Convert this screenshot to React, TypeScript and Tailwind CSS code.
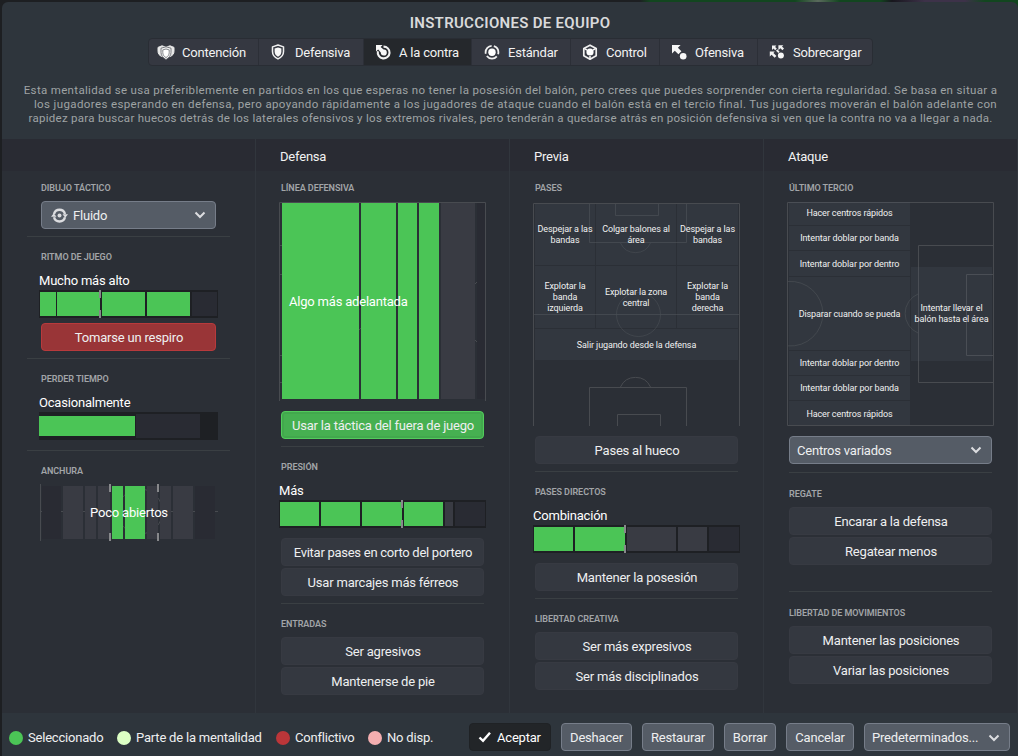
import type { ReactNode } from "react";
import { clsx } from "clsx";

const GREEN = "bg-[#4bc556]";
const GREY = "bg-[#393b43]";
const DARK = "bg-[#292b33]";

/* ---------- Icons ---------- */

const SHIELD = "M9 1.2 15.2 3.2V8.4C15.2 12.4 12.8 15 9 16.8 5.2 15 2.8 12.4 2.8 8.4V3.2Z";

const ContainIcon = () => (
  <svg viewBox="0 0 18 18" className="h-[18px] w-[18px] shrink-0">
    <path d="M1 4.4 5 2.8 9 4.2 13 2.8 17 4.4V8.2C17 11 15.6 12.4 13 13.6L5 13.6C2.4 12.4 1 11 1 8.2Z" fill="#e9e9e9" stroke="#e9e9e9" strokeWidth="1" strokeLinejoin="round" />
    <path d="M9 3.8 14 5.2V9.4C14 12.6 12 14.8 9 16.6 6 14.8 4 12.6 4 9.4V5.2Z" fill="#f2f2f2" stroke="#5a5d64" strokeWidth="0.8" />
    <path d="M9 6 12.2 6.9V9.6C12.2 11.9 11 13.3 9 14.6 7 13.3 5.8 11.9 5.8 9.6V6.9Z" fill="#fff" stroke="#6a6d74" strokeWidth="0.8" />
  </svg>
);

const ShieldIcon = () => (
  <svg viewBox="0 0 18 18" className="h-4 w-[18px] shrink-0">
    <path d={SHIELD} fill="none" stroke="#f0f0f0" strokeWidth="1.7" strokeLinejoin="round" />
    <path d="M9 3.8 12.8 5V8.6C12.8 11.2 11.4 13 9 14.3 6.6 13 5.2 11.2 5.2 8.6V5Z" fill="#f7f7f7" />
  </svg>
);

const CounterIcon = () => (
  <svg viewBox="0 0 18 18" className="h-[18px] w-[18px] shrink-0">
    <path d="M9.5 3.6A5.9 5.9 0 1 1 3.9 8.2" fill="none" stroke="#f2f2f2" strokeWidth="2.1" />
    <path d="M2 2H8.6L6.6 4 9.6 6.6A3 3 0 1 1 6.8 9.6L4.2 6.4 2 8.6Z" fill="#f7f7f7" />
  </svg>
);

const StandardIcon = () => (
  <svg viewBox="0 0 18 18" className="h-[18px] w-[18px] shrink-0">
    <circle cx="9" cy="9.2" r="6.4" fill="none" stroke="#f0f0f0" strokeWidth="1.8" strokeDasharray="11.1 2.3" strokeDashoffset="-4.5" />
    <circle cx="9" cy="9.2" r="3.7" fill="#fff" />
  </svg>
);

const ControlIcon = () => (
  <svg viewBox="0 0 18 18" className="h-[18px] w-[18px] shrink-0">
    <path d="M9 2.2 15.2 5.4V12.8L9 16.2 2.8 12.8V5.4Z" fill="none" stroke="#f0f0f0" strokeWidth="1.7" strokeLinejoin="round" />
    <path d="M3 5.4 6 7M15 5.4 12 7M9 16V13" stroke="#f0f0f0" strokeWidth="1.6" />
    <circle cx="9" cy="9" r="3.6" fill="#fff" />
  </svg>
);

const AttackIcon = () => (
  <svg viewBox="0 0 18 18" className="h-[18px] w-[18px] shrink-0">
    <path d="M2 2H10.6L7.9 4.7 11.4 8.2 8.4 11.2 4.8 7.7 2 10.6Z" fill="#f7f7f7" />
    <circle cx="13.2" cy="13.2" r="3.3" fill="#f7f7f7" />
  </svg>
);

const OverloadIcon = () => (
  <svg viewBox="0 0 18 18" className="h-[18px] w-[18px] shrink-0">
    <path d="M4 2.6H8.4L7.1 3.9 8.8 5.6 7.2 7.2 5.5 5.5 4 7Z" fill="#f2f2f2" />
    <path d="M10.4 2.2H15.4L14 3.6 16 5.6 14.4 7.2 12.4 5.2 10.4 7.2Z" fill="#f2f2f2" />
    <path d="M1.8 8.6H6.8L5.4 10 8.4 13 6.6 14.8 3.6 11.8 1.8 13.6Z" fill="#f2f2f2" />
    <path d="M8.6 7 11 9.4" stroke="#f2f2f2" strokeWidth="1.8" />
    <circle cx="12.9" cy="12.6" r="3" fill="#f7f7f7" />
  </svg>
);

const FluidIcon = () => (
  <svg viewBox="0 0 18 18" className="h-[17px] w-[17px] shrink-0">
    <path d="M3.2 7.4A6 6 0 0 1 14.8 7.4M14.8 10.8A6 6 0 0 1 3.2 10.8" fill="none" stroke="#dcdde0" strokeWidth="2.6" />
    <path d="M0 10.2 2.9 6.6 5.8 10.2ZM12.2 7.8H18L15.1 11.4Z" fill="#dcdde0" />
    <circle cx="9" cy="9" r="2.1" fill="#dcdde0" />
  </svg>
);

const Chevron = () => (
  <svg viewBox="0 0 12 8" className="h-2 w-3 shrink-0">
    <path d="M1.5 1.5 6 6 10.5 1.5" fill="none" stroke="#dcdde0" strokeWidth="2" />
  </svg>
);

const CheckIcon = () => (
  <svg viewBox="0 0 14 12" className="h-3 w-3.5 shrink-0">
    <path d="M1.5 6.5 5 9.8 12 1.8" fill="none" stroke="#fff" strokeWidth="2.4" />
  </svg>
);

/* ---------- Building blocks ---------- */

const Label = ({ className, children }: { className?: string; children: ReactNode }) => (
  <h3 className={clsx("ml-[25px] h-[13px] whitespace-nowrap pt-px text-[9px] font-semibold leading-[13px] tracking-[-0.05px] text-[#a2a5a8]", className)}>
    {children}
  </h3>
);

const Value = ({ className, children }: { className?: string; children: ReactNode }) => (
  <div className={clsx("mt-2.5 h-4 whitespace-nowrap leading-4 text-white", className)}>{children}</div>
);

const Divider = ({ className }: { className?: string }) => (
  <div className={clsx("h-px shrink-0 bg-[#3a3f43]", className)} />
);

interface OptionProps {
  variant?: "default" | "selected" | "conflict";
  className?: string;
  children: ReactNode;
}

const Option = ({ variant = "default", className, children }: OptionProps) => (
  <button
    className={clsx(
      "flex h-7 items-center justify-center whitespace-nowrap rounded border pl-px pt-px text-[#eeeff0]",
      variant === "default" && "border-[#373a42] bg-[#343840]",
      variant === "selected" && "border-[#52cc5c] bg-[#46b051] shadow-[inset_0_0_0_2px_#42a84d]",
      variant === "conflict" && "border-[#b83a3c] bg-[#993537]",
      className
    )}
  >
    {children}
  </button>
);

const OptionList = ({ className, children }: { className?: string; children: ReactNode }) => (
  <div className={clsx("ml-[25px] flex w-[203px] flex-col gap-0.5", className)}>{children}</div>
);

const Tick = ({ className }: { className: string }) => (
  <div className={clsx("absolute inset-y-0 flex w-0.5 flex-col justify-between", className)}>
    <span className="h-2 bg-[#87888b]" />
    <span className="h-2 bg-[#87888b]" />
  </div>
);

interface SliderProps {
  segments: string[];
  tick?: string;
  className?: string;
}

const Slider = ({ segments, tick, className }: SliderProps) => (
  <div className={clsx("relative mt-px flex h-7 items-center bg-[#1e2024]", className)}>
    {segments.map((segment, i) => (
      <div key={i} className={clsx("shrink-0", segment)} />
    ))}
    {tick && <Tick className={tick} />}
  </div>
);

const Zone = ({ className, children }: { className?: string; children: ReactNode }) => (
  <button className={clsx("flex items-center justify-center bg-[#5a636d]/16 text-center tracking-[-0.1px]", className)}>{children}</button>
);

const Column = ({ title, children }: { title?: string; children: ReactNode }) => (
  <section className="flex w-[254px] flex-col border-r border-[#31363d] bg-[#2b2f36]">
    <h2 className="flex h-8 shrink-0 items-center bg-[#292b33] pl-6 pt-[3px] text-[#f2f2f2]">{title}</h2>
    {children}
  </section>
);

/* ---------- Columns ---------- */

const ShapeColumn = () => (
  <Column>
    <Label className="ml-[39px] mt-2.5">DIBUJO TÁCTICO</Label>
    <button className="ml-[39px] mt-[7px] flex h-7 w-[175px] items-center rounded border border-[#767d89] bg-[#555c66] pl-[9px] pr-[9px] text-[#eeeff0]">
      <FluidIcon />
      <span className="ml-[5px] flex-1 pt-px text-left">Fluido</span>
      <Chevron />
    </button>
    <Divider className="ml-[25px] mt-[7px] w-[203px]" />

    <Label className="ml-[39px] mt-[13px]">RITMO DE JUEGO</Label>
    <Value className="ml-[37px]">Mucho más alto</Value>
    <Slider
      className="ml-[37px] w-[179px]"
      tick="left-[60px]"
      segments={[
        `ml-px h-6 w-4 ${GREEN}`,
        `ml-px h-6 w-[43px] ${GREEN}`,
        `ml-0.5 h-6 w-[43px] ${GREEN}`,
        `ml-0.5 h-6 w-[43px] ${GREEN}`,
        `ml-0.5 h-6 w-[25px] ${DARK}`,
      ]}
    />
    <Option variant="conflict" className="ml-[39px] mt-[5px] w-[175px]">Tomarse un respiro</Option>
    <Divider className="ml-[25px] mt-[7px] w-[203px]" />

    <Label className="ml-[39px] mt-[13px]">PERDER TIEMPO</Label>
    <Value className="ml-[37px]">Ocasionalmente</Value>
    <Slider
      className="ml-[37px] w-[179px]"
      segments={[`h-5 w-24 ${GREEN}`, `ml-px h-6 w-16 ${DARK}`]}
    />
    <Divider className="ml-[25px] mt-2.5 w-[203px]" />

    <Label className="ml-[39px] mt-[13px]">ANCHURA</Label>
    <div className="relative ml-[38px] mt-[7px] h-[57px] w-[178px]">
      <svg viewBox="0 0 178 57" className="absolute inset-0 h-[57px] w-[178px]" fill="none" stroke="#484b50">
        <path d="M0.5 0V57M1 27.5H178" />
        <circle cx="100" cy="27.5" r="22.5" />
      </svg>
      <div className="relative flex h-full items-center gap-0.5 pb-0.5 pl-0.5 pt-0.5">
        <div className={`h-[53px] w-[19px] ${DARK}`} />
        <div className={`h-[53px] w-5 ${GREY}`} />
        <div className={`h-[53px] w-[11px] ${GREY}`} />
        <div className={`h-[53px] w-3 ${GREY}`} />
        <div className={`h-[53px] w-[11px] ${GREEN}`} />
        <div className={`h-[53px] w-5 ${GREEN}`} />
        <div className={`h-[53px] w-[11px] ${GREY}`} />
        <div className={`h-[53px] w-[11px] ${GREY}`} />
        <div className={`h-[53px] w-5 ${GREY}`} />
        <div className={`h-[53px] w-5 ${DARK}`} />
      </div>
      <Tick className="left-[69px]" />
      <Tick className="left-[117px]" />
      <div className="absolute inset-0 flex items-center justify-center whitespace-nowrap text-white">Poco abiertos</div>
    </div>
  </Column>
);

const DefenceColumn = () => (
  <Column title="Defensa">
    <Label className="mt-2.5">LÍNEA DEFENSIVA</Label>
    <div className="relative ml-[23px] mt-2 h-[199px] w-[207px]">
      <svg viewBox="0 0 207 199" className="absolute inset-0 h-[199px] w-[207px]" fill="none" stroke="#484b50">
        <path d="M0.5 199V0.5H206.5V199M1 43.5H4M1 72.5H4M1 153.5H4M1 180.5H4" />
        <path d="M80 128 82 126M196 82 198 80M196 138 198 140" />
      </svg>
      <div className="relative flex h-[197px] gap-0.5 pl-[3px] pt-px">
        <div className={`w-[77px] ${GREEN}`} />
        <div className={`w-[35px] ${GREEN}`} />
        <div className={`w-[19px] ${GREEN}`} />
        <div className={`w-5 ${GREEN}`} />
        <div className={`w-[34px] ${GREY}`} />
        <div className={`w-2 ${DARK}`} />
      </div>
      <div className="absolute inset-y-0 left-2.5 flex items-center whitespace-nowrap text-white">Algo más adelantada</div>
    </div>
    <OptionList className="mt-2.5">
      <Option variant="selected">Usar la táctica del fuera de juego</Option>
    </OptionList>
    <Divider className="ml-[25px] mt-[7px] w-[203px]" />

    <Label className="mt-[13px]">PRESIÓN</Label>
    <Value className="ml-[23px]">Más</Value>
    <Slider
      className="ml-[23px] w-[207px]"
      tick="left-[122px]"
      segments={[
        `ml-px h-6 w-[39px] ${GREEN}`,
        `ml-0.5 h-6 w-[39px] ${GREEN}`,
        `ml-0.5 h-6 w-10 ${GREEN}`,
        `ml-0.5 h-6 w-[39px] ${GREEN}`,
        `ml-0.5 h-6 w-2 ${GREY}`,
        `ml-0.5 h-6 w-[30px] ${DARK}`,
      ]}
    />
    <OptionList className="mt-2.5">
      <Option className="tracking-[-0.27px]">Evitar pases en corto del portero</Option>
      <Option>Usar marcajes más férreos</Option>
    </OptionList>
    <Divider className="ml-[25px] mt-[7px] w-[203px]" />

    <Label className="mt-[13px]">ENTRADAS</Label>
    <OptionList className="mt-[7px]">
      <Option>Ser agresivos</Option>
      <Option>Mantenerse de pie</Option>
    </OptionList>
  </Column>
);

const BuildUpColumn = () => (
  <Column title="Previa">
    <Label className="mt-2.5">PASES</Label>
    <div className="relative ml-[23px] mt-2 h-[224px] w-[207px] pl-0.5 pt-0.5 text-[9px] leading-[11px] text-[#f0f0f0]">
      <svg viewBox="0 0 207 224" className="absolute inset-0 h-[224px] w-[207px]" fill="none" stroke="#484b50">
        <path d="M0.5 224V1.5H206.5V224" />
        <path d="M82.5 2V13.5H125.5V2M56.5 2V40.5H153.5V2M1 112.5H206" strokeOpacity="0.75" />
        <path d="M87.5 41A16.5 16.5 0 0 0 117.5 41" strokeOpacity="0.6" />
        <circle cx="105.5" cy="112.5" r="22" strokeOpacity="0.6" />
        <path d="M56.5 224V185.5H153.5V224M84.5 224V212.5H127.5V224M87.5 185A16.5 16.5 0 0 1 117.5 185" />
      </svg>
      <div className="relative grid w-[203px] grid-cols-[60px_80px_61px] grid-rows-[61px_62px_31px] gap-px">
        <Zone>Despejar a las<br />bandas</Zone>
        <Zone>Colgar balones al<br />área</Zone>
        <Zone>Despejar a las<br />bandas</Zone>
        <Zone>Explotar la<br />banda<br />izquierda</Zone>
        <Zone className="pt-0.5">Explotar la zona<br />central</Zone>
        <Zone>Explotar la<br />banda<br />derecha</Zone>
        <Zone className="col-span-3 pt-0.5">Salir jugando desde la defensa</Zone>
      </div>
    </div>
    <OptionList className="mt-2.5">
      <Option>Pases al hueco</Option>
    </OptionList>
    <Divider className="ml-[25px] mt-[7px] w-[203px]" />

    <Label className="mt-[13px]">PASES DIRECTOS</Label>
    <Value className="ml-[23px]">Combinación</Value>
    <Slider
      className="ml-[23px] w-[207px]"
      tick="left-[91px]"
      segments={[
        `ml-px h-6 w-[39px] ${GREEN}`,
        `ml-0.5 h-6 w-[50px] ${GREEN}`,
        `ml-0.5 h-6 w-[49px] ${GREY}`,
        `ml-0.5 h-6 w-[29px] ${GREY}`,
        `ml-0.5 h-6 w-[30px] ${DARK}`,
      ]}
    />
    <OptionList className="mt-2.5">
      <Option>Mantener la posesión</Option>
    </OptionList>
    <Divider className="ml-[25px] mt-[7px] w-[203px]" />

    <Label className="mt-[13px]">LIBERTAD CREATIVA</Label>
    <OptionList className="mt-[7px]">
      <Option>Ser más expresivos</Option>
      <Option>Ser más disciplinados</Option>
    </OptionList>
  </Column>
);

const AttackColumn = () => (
  <Column title="Ataque">
    <Label className="mt-2.5">ÚLTIMO TERCIO</Label>
    <div className="relative ml-[23px] mt-2 h-[224px] w-[207px] text-[9px] leading-[11px] text-[#f0f0f0]">
      <svg viewBox="0 0 207 224" className="absolute inset-0 h-[224px] w-[207px]" fill="none" stroke="#484b50">
        <path d="M0.5 0.5H206.5V223.5H0.5Z" />
        <path d="M206 43.5H131.5V180.5H206M206 72.5H179.5V153.5H206" />
        <path d="M1 79.5A32.3 32.3 0 1 1 1 143.9M131 92A21.2 21.2 0 0 0 131 131" strokeOpacity="0.7" />
      </svg>
      <div className="relative flex items-center gap-px pl-0.5">
        <div className="grid w-[121px] grid-rows-[23px_24px_25px_73px_24px_24px_24px] gap-px">
          <Zone>Hacer centros rápidos</Zone>
          <Zone>Intentar doblar por banda</Zone>
          <Zone className="pt-px">Intentar doblar por dentro</Zone>
          <Zone className="pt-px">Disparar cuando se pueda</Zone>
          <Zone>Intentar doblar por dentro</Zone>
          <Zone>Intentar doblar por banda</Zone>
          <Zone className="pt-0.5">Hacer centros rápidos</Zone>
        </div>
        <Zone className="h-[94px] w-[81px]">Intentar llevar el<br />balón hasta el área</Zone>
      </div>
    </div>
    <button className="ml-[25px] mt-2.5 flex h-7 w-[203px] items-center justify-between rounded border border-[#767d89] bg-[#555c66] pl-[7px] pr-[9px] text-[#eeeff0]">
      <span className="pt-px">Centros variados</span>
      <Chevron />
    </button>
    <Divider className="ml-[25px] mt-2 w-[203px]" />

    <Label className="mt-3.5">REGATE</Label>
    <OptionList className="mt-[7px]">
      <Option>Encarar a la defensa</Option>
      <Option>Regatear menos</Option>
    </OptionList>
    <Divider className="ml-[25px] mt-[26px] w-[203px]" />

    <Label className="mt-3.5">LIBERTAD DE MOVIMIENTOS</Label>
    <OptionList className="mt-[7px]">
      <Option>Mantener las posiciones</Option>
      <Option>Variar las posiciones</Option>
    </OptionList>
  </Column>
);

/* ---------- Header and footer ---------- */

const mentalities = [
  { name: "Contención", icon: <ContainIcon />, className: "w-[110px] pl-2 gap-[7px]" },
  { name: "Defensiva", icon: <ShieldIcon />, className: "w-[105px] pl-2.5 gap-2" },
  { name: "A la contra", icon: <CounterIcon />, className: "w-[108px] pl-2.5 gap-[7px]", active: true },
  { name: "Estándar", icon: <StandardIcon />, className: "w-[99px] pl-[11px] gap-[7px]" },
  { name: "Control", icon: <ControlIcon />, className: "w-[89px] pl-2.5 gap-[7px]" },
  { name: "Ofensiva", icon: <AttackIcon />, className: "w-[98px] pl-2.5 gap-[7px]" },
  { name: "Sobrecargar", icon: <OverloadIcon />, className: "w-[114px] pl-2.5 gap-[7px]" },
];

const legend = [
  { name: "Seleccionado", dot: "bg-[#4bc556]", className: "w-[108px]" },
  { name: "Parte de la mentalidad", dot: "bg-[#dcffc4]", className: "w-[159px]" },
  { name: "Conflictivo", dot: "bg-[#bb3639]", className: "w-[92px]" },
  { name: "No disp.", dot: "bg-[#f4aeb0]", className: "w-[101px]" },
];

const FooterButton = ({ className, children }: { className: string; children: ReactNode }) => (
  <button className={clsx("mr-2.5 flex h-7 shrink-0 items-center justify-center rounded border border-[#767d89] bg-[#555c66] pt-px text-[#eeeff0]", className)}>
    {children}
  </button>
);

const App = () => (
  <div className="h-[756px] w-[1018px] overflow-hidden bg-[linear-gradient(90deg,#1d1f22_640px,#12461f_650px,#12461f_795px,#5a6a5c_818px,#12461f_840px,#12461f_880px,#17161d_892px,#3d3249_925px,#3d3249_965px,#12461f_985px)] pl-0.5 pt-0.5 font-['Roboto','Liberation_Sans',sans-serif] text-[13px] tracking-[-0.2px]">
    <div className="flex h-[754px] flex-col rounded-t-md bg-[#2e353c]">
      <header className="flex h-[137px] shrink-0 flex-col items-center">
        <h1 className="mt-[11px] h-5 whitespace-nowrap text-[15px] font-semibold leading-5 tracking-[0.3px] text-[#d9dadb]">INSTRUCCIONES DE EQUIPO</h1>
        <nav className="ml-px mt-[5px] flex h-7 rounded border border-[#292d34] bg-[#353841]">
          {mentalities.map((mentality) => (
            <button
              key={mentality.name}
              className={clsx(
                "flex items-center whitespace-nowrap border-r border-[#2c2f37] text-[#f2f2f2] last:border-r-0",
                mentality.active && "bg-[#25282c]",
                mentality.className
              )}
            >
              {mentality.icon}
              <span className="pt-px">{mentality.name}</span>
            </button>
          ))}
        </nav>
        <p className="ml-px mt-[17px] whitespace-nowrap text-center text-[11.5px] leading-[14px] text-[#9fa3a4]">
          <span className="block tracking-[0.335px]">
            Esta mentalidad se usa preferiblemente en partidos en los que esperas no tener la posesión del balón, pero crees que puedes sorprender con cierta regularidad. Se basa en situar a
          </span>
          <span className="block pl-2.5 tracking-[0.385px]">
            los jugadores esperando en defensa, pero apoyando rápidamente a los jugadores de ataque cuando el balón está en el tercio final. Tus jugadores moverán el balón adelante con
          </span>
          <span className="block tracking-[0.285px]">
            rapidez para buscar huecos detrás de los laterales ofensivos y los extremos rivales, pero tenderán a quedarse atrás en posición defensiva si ven que la contra no va a llegar a nada.
          </span>
        </p>
      </header>

      <main className="flex h-[574px] shrink-0">
        <ShapeColumn />
        <DefenceColumn />
        <BuildUpColumn />
        <AttackColumn />
      </main>

      <footer className="flex h-[43px] shrink-0 items-start pl-[7px] pt-2.5">
        {legend.map((item) => (
          <div key={item.name} className={clsx("flex h-[30px] shrink-0 items-center gap-[5px] whitespace-nowrap text-[#eeeff0]", item.className)}>
            <span className={clsx("h-3.5 w-3.5 rounded-full", item.dot)} />
            {item.name}
          </div>
        ))}
        <button className="mr-2.5 flex h-7 w-[82px] shrink-0 items-center rounded border border-[#1f2225] bg-[#222528] pl-2 text-white">
          <CheckIcon />
          <span className="ml-[5px] pt-px">Aceptar</span>
        </button>
        <FooterButton className="w-[71px]">Deshacer</FooterButton>
        <FooterButton className="w-[72px]">Restaurar</FooterButton>
        <FooterButton className="w-[52px]">Borrar</FooterButton>
        <FooterButton className="w-[68px]">Cancelar</FooterButton>
        <FooterButton className="w-[146px]">
          <span className="flex-1 pl-[7px] text-left">Predeterminados...</span>
          <span className="pr-[9px]"><Chevron /></span>
        </FooterButton>
      </footer>
    </div>
  </div>
);

export default App;
